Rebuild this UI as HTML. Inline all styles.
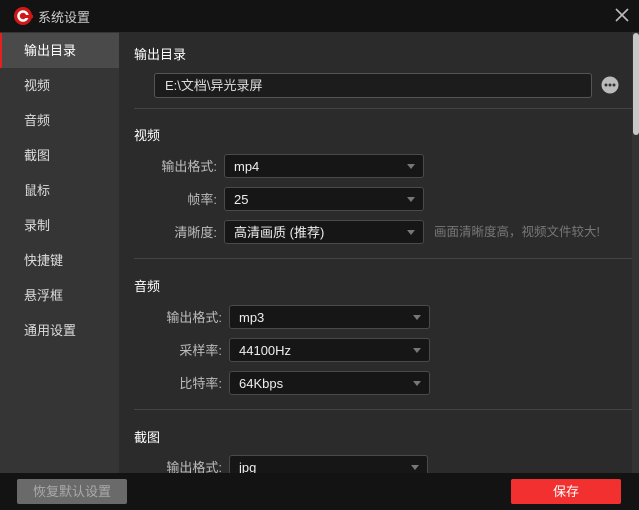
<!DOCTYPE html>
<html><head><meta charset="utf-8"><style>
*{margin:0;padding:0;box-sizing:border-box}
body{width:639px;height:510px;overflow:hidden;background:#2b2b2b;font-family:"Liberation Sans","Noto Sans CJK SC",sans-serif;font-size:13px;color:#ddd;position:relative}
.abs{position:absolute}
.title{left:0;top:0;width:639px;height:32px;background:#131313}
.side{left:0;top:32px;width:119px;height:441px;background:#353535}
.item{position:absolute;left:0;width:119px;height:35px;line-height:35px;padding-left:24px;color:#ddd;font-size:13px}
.item.act{background:#4a4a4a;border-left:2px solid #e52020;padding-left:22px;color:#fff}
.h{font-size:13px;color:#fff}
.lbl{font-size:13px;color:#bbb;text-align:right;width:80px;height:24px;line-height:24px}
.sel{background:#161616;border:1px solid #4a4a4a;border-radius:3px;height:24px;line-height:24px;padding-left:9px;color:#eee}
.sel:after{content:"";position:absolute;right:8px;top:9px;border-left:4px solid transparent;border-right:4px solid transparent;border-top:5px solid #777}
.hr{left:134px;width:498px;height:1px;background:#444}
.bottom{left:0;top:473px;width:639px;height:37px;background:#131313}
</style></head><body>
<div class="abs title"></div>
<svg class="abs" style="left:13px;top:6px" width="20" height="20" viewBox="0 0 20 20"><circle cx="10" cy="10" r="9" fill="#d01818"/><circle cx="10" cy="10" r="4.5" fill="none" stroke="#fff" stroke-width="2.5"/><rect x="12" y="9" width="8" height="3" fill="#d01818"/></svg>
<div class="abs" style="left:38px;top:7px;color:#ccc;font-size:13px">系统设置</div>
<svg class="abs" style="left:614px;top:7px" width="16" height="16" viewBox="0 0 16 16"><path d="M2 2L14 14M14 2L2 14" stroke="#bbb" stroke-width="1.6"/></svg>
<div class="abs side">
<div class="item act" style="top:1px">输出目录</div>
<div class="item" style="top:36px">视频</div>
<div class="item" style="top:71px">音频</div>
<div class="item" style="top:106px">截图</div>
<div class="item" style="top:141px">鼠标</div>
<div class="item" style="top:176px">录制</div>
<div class="item" style="top:211px">快捷键</div>
<div class="item" style="top:246px">悬浮框</div>
<div class="item" style="top:281px">通用设置</div>
</div>
<div class="abs" style="left:632px;top:32px;width:7px;height:441px;background:#333"></div>
<div class="abs" style="left:633px;top:33px;width:6px;height:102px;background:#c8c8c8;border-radius:3px"></div>

<div class="abs h" style="left:134px;top:44px">输出目录</div>
<div class="abs" style="left:154px;top:73px;width:438px;height:25px;background:#1c1c1c;border:1px solid #555;border-radius:3px;line-height:24px;padding-left:10px;color:#ddd">E:\文档\异光录屏</div>
<svg class="abs" style="left:601px;top:76px" width="18" height="18"><circle cx="9" cy="9" r="8.5" fill="#bbb"/><circle cx="5" cy="9" r="1.5" fill="#333"/><circle cx="9" cy="9" r="1.5" fill="#333"/><circle cx="13" cy="9" r="1.5" fill="#333"/></svg>
<div class="abs hr" style="top:108px"></div>

<div class="abs h" style="left:134px;top:125px">视频</div>
<div class="abs lbl" style="left:137px;top:155px">输出格式:</div>
<div class="abs sel" style="left:224px;top:154px;width:200px">mp4</div>
<div class="abs lbl" style="left:137px;top:188px">帧率:</div>
<div class="abs sel" style="left:224px;top:187px;width:200px">25</div>
<div class="abs lbl" style="left:137px;top:221px">清晰度:</div>
<div class="abs sel" style="left:224px;top:220px;width:200px">高清画质 (推荐)</div>
<div class="abs" style="left:434px;top:220px;line-height:24px;color:#777;font-size:12.5px">画面清晰度高，视频文件较大!</div>
<div class="abs hr" style="top:258px"></div>

<div class="abs h" style="left:134px;top:276px">音频</div>
<div class="abs lbl" style="left:142px;top:306px">输出格式:</div>
<div class="abs sel" style="left:229px;top:305px;width:201px">mp3</div>
<div class="abs lbl" style="left:142px;top:339px">采样率:</div>
<div class="abs sel" style="left:229px;top:338px;width:201px">44100Hz</div>
<div class="abs lbl" style="left:142px;top:372px">比特率:</div>
<div class="abs sel" style="left:229px;top:371px;width:201px">64Kbps</div>
<div class="abs hr" style="top:409px"></div>

<div class="abs h" style="left:134px;top:427px">截图</div>
<div class="abs lbl" style="left:142px;top:456px">输出格式:</div>
<div class="abs sel" style="left:229px;top:455px;width:199px">jpg</div>

<div class="abs bottom"></div>
<div class="abs" style="left:17px;top:479px;width:110px;height:25px;background:#6a6a6a;border-radius:2px;color:#aaa;text-align:center;line-height:25px">恢复默认设置</div>
<div class="abs" style="left:511px;top:479px;width:110px;height:25px;background:#f23030;border-radius:2px;color:#fff;text-align:center;line-height:25px">保存</div>
</body></html>
